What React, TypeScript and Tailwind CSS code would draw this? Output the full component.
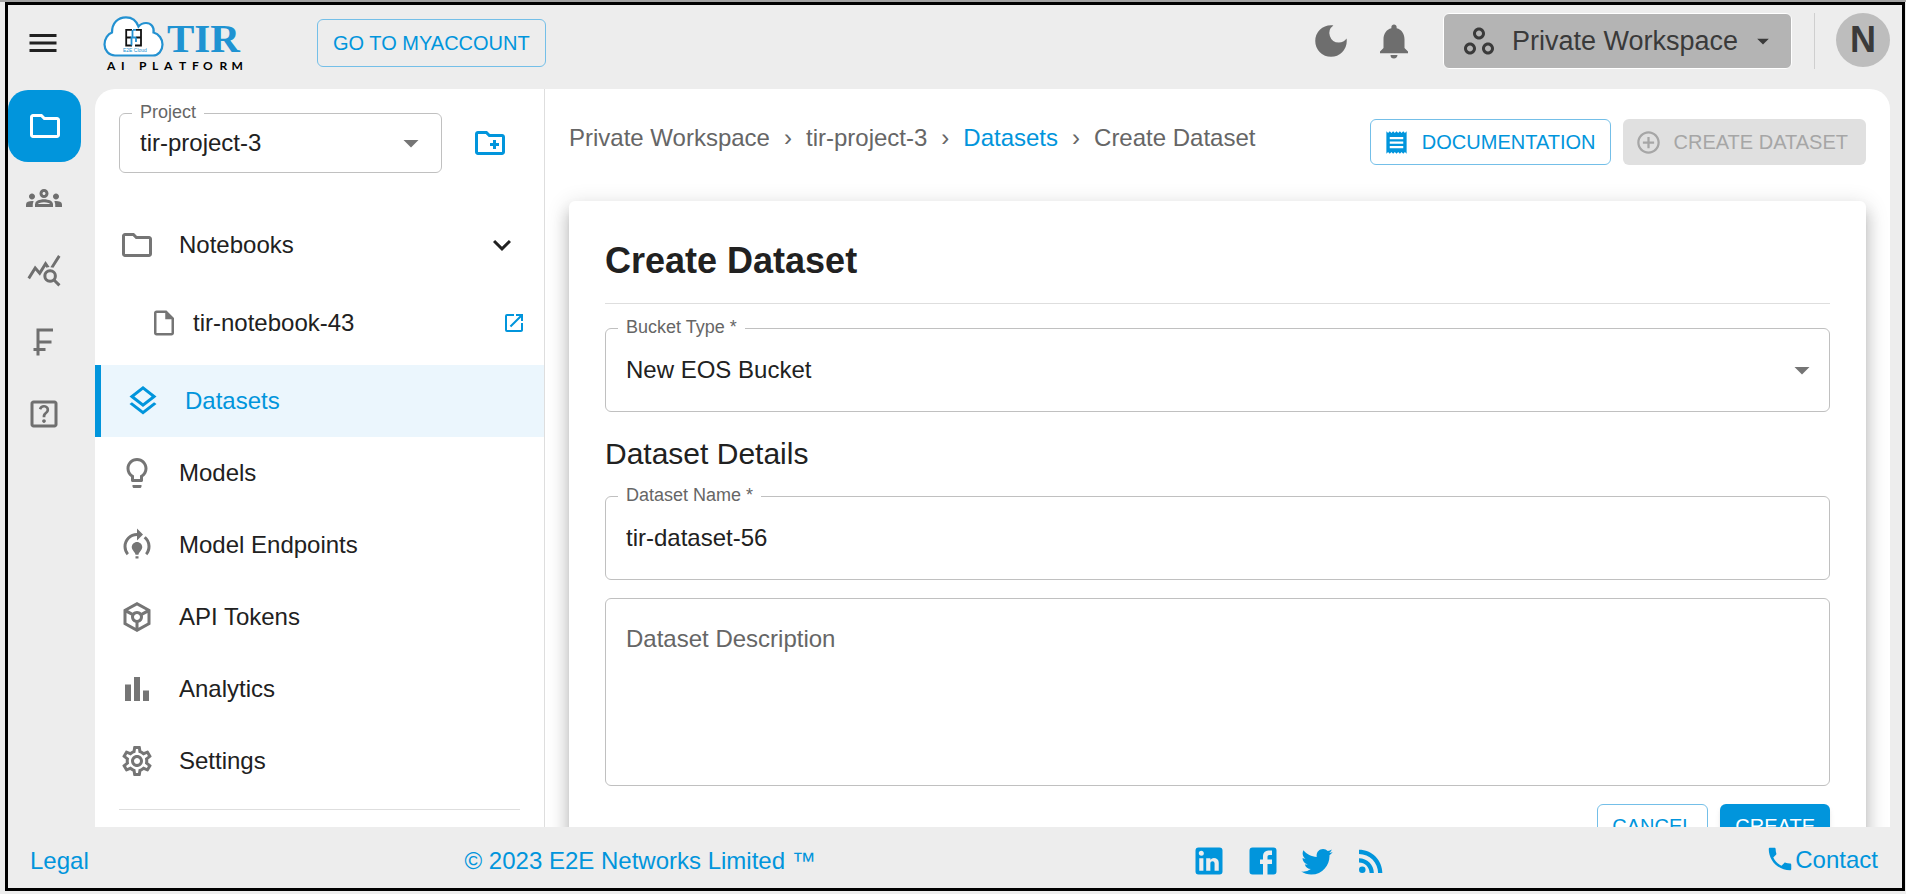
import type { ReactNode } from "react";
import {
  MdAddCircleOutline,
  MdArrowDropDown,
  MdCurrencyFranc,
  MdDarkMode,
  MdExpandMore,
  MdMenu,
  MdModelTraining,
  MdNotifications,
  MdOpenInNew,
  MdOutlineCreateNewFolder,
  MdOutlineFolder,
  MdOutlineGroups,
  MdOutlineHelpCenter,
  MdOutlineInsertDriveFile,
  MdOutlineLayers,
  MdOutlineLightbulb,
  MdOutlineSettings,
  MdOutlineToken,
  MdOutlineWorkspaces,
  MdPhone,
  MdQueryStats,
  MdReceipt,
  MdRssFeed,
} from "react-icons/md";

function PathIcon({ d }: { d: string }) {
  return (
    <svg viewBox="0 0 24 24" fill="currentColor" className="size-9" aria-hidden="true">
      <path d={d} />
    </svg>
  );
}

const LINKEDIN =
  "M19 3a2 2 0 0 1 2 2v14a2 2 0 0 1-2 2H5a2 2 0 0 1-2-2V5a2 2 0 0 1 2-2h14m-.5 15.5v-5.3a3.26 3.26 0 0 0-3.26-3.26c-.85 0-1.84.52-2.32 1.3v-1.11h-2.79v8.37h2.79v-4.93c0-.77.62-1.4 1.39-1.4a1.4 1.4 0 0 1 1.4 1.4v4.93h2.79M6.88 8.56a1.68 1.68 0 0 0 1.68-1.68c0-.93-.75-1.69-1.68-1.69a1.69 1.69 0 0 0-1.69 1.69c0 .93.76 1.68 1.69 1.68m1.39 9.94v-8.37H5.5v8.37h2.77z";
const FACEBOOK =
  "M5 3h14a2 2 0 0 1 2 2v14a2 2 0 0 1-2 2h-4v-7h3v-3h-3V9a1 1 0 0 1 1-1h2V5h-2.5A3.5 3.5 0 0 0 12 8.5V11h-2v3h2v7H5a2 2 0 0 1-2-2V5a2 2 0 0 1 2-2z";
const TWITTER =
  "M22.46 6c-.77.35-1.6.58-2.46.69.88-.53 1.56-1.37 1.88-2.38-.83.5-1.75.85-2.72 1.05C18.37 4.5 17.26 4 16 4c-2.35 0-4.27 1.92-4.27 4.29 0 .34.04.67.11.98C8.28 9.09 5.11 7.38 3 4.79c-.37.63-.58 1.37-.58 2.15 0 1.49.75 2.81 1.91 3.56-.71 0-1.37-.2-1.95-.5v.03c0 2.08 1.48 3.82 3.44 4.21a4.22 4.22 0 0 1-1.93.07 4.28 4.28 0 0 0 4 2.98 8.521 8.521 0 0 1-5.33 1.84c-.34 0-.68-.02-1.02-.06C3.44 20.29 5.7 21 8.12 21 16 21 20.33 14.46 20.33 8.79c0-.19 0-.37-.01-.56.84-.6 1.56-1.36 2.14-2.23z";
const BARS = "M4 9h4v11H4zM16 13h4v7h-4zM10 4h4v16h-4z";

function Logo() {
  return (
    <svg viewBox="0 0 142 56" className="h-14 w-[142px]" role="img" aria-label="TIR AI Platform">
      <path
        d="M12 40.500C5.500 40.500 1.500 35 1.500 29.500C1.500 23.500 5 19 9 17.500C9 8 15 2.300 23 2.300C29 2.300 33.500 6 35.500 11.500C38 8.500 40.500 8 43 8C48 8 51.500 12 50.500 17.500C56 19 59.500 24 59.500 29.500C59.500 35.500 55.500 40.500 50 40.500Z"
        fill="#fff"
        stroke="#2391d1"
        strokeWidth="2.2"
      />
      <g fill="none" strokeWidth="1.8">
        <path d="M29 14.900H23.200V30.500H29M23.200 22.500H28" stroke="#111" />
        <path d="M33 14.900H38V30.500H32M38 22.500H33" stroke="#111" />
        <path d="M29.500 14.900V22.500M33 14.900H30M33 22.500H28.500V30.500M33 22.500V27" stroke="#2391d1" />
      </g>
      <text x="20" y="37" fontSize="5" fill="#2391d1" fontFamily="Liberation Sans, sans-serif">
        E2E Cloud
      </text>
      <text x="64" y="37" fontSize="41" fill="#1f93d2" fontFamily="Liberation Serif, serif" fontWeight="700">
        TIR
      </text>
      <text
        x="4 18 28 36 49 61 76 89 100 116.500 128.500"
        y="55"
        fontSize="12"
        fill="#000"
        fontFamily="Lato, sans-serif"
        fontWeight="700"
      >
        AI PLATFORM
      </text>
    </svg>
  );
}

const rail: { label: string; icon: ReactNode }[] = [
  { label: "Projects", icon: <MdOutlineFolder /> },
  { label: "Team", icon: <MdOutlineGroups /> },
  { label: "Usage", icon: <MdQueryStats /> },
  { label: "Billing", icon: <MdCurrencyFranc /> },
  { label: "Help", icon: <MdOutlineHelpCenter /> },
];

function Rail() {
  return (
    <nav aria-label="Primary" className="w-[87px] shrink-0 pt-px">
      {rail.map(({ label, icon }, i) => (
        <a
          key={label}
          href="#"
          aria-label={label}
          className={
            i === 0
              ? "flex h-[72px] w-[73px] items-center justify-center rounded-[20px] bg-[#0195dc] text-4xl text-white"
              : "flex h-[72px] w-[72px] items-center justify-center text-4xl text-[#6f6f6f]"
          }
        >
          {icon}
        </a>
      ))}
    </nav>
  );
}

const menu: { label: string; icon: ReactNode }[] = [
  { label: "Models", icon: <MdOutlineLightbulb /> },
  { label: "Model Endpoints", icon: <MdModelTraining /> },
  { label: "API Tokens", icon: <MdOutlineToken /> },
  { label: "Analytics", icon: <PathIcon d={BARS} /> },
  { label: "Settings", icon: <MdOutlineSettings /> },
];

function Sidebar() {
  return (
    <aside className="w-[450px] shrink-0 overflow-hidden border-r border-[#dedede] pt-6">
      <div className="flex items-center gap-[30px] px-6">
        <div className="relative flex-1 rounded-md border border-[#c0c0c0]">
          <label htmlFor="project" className="absolute -top-3.5 left-3 bg-white px-2 text-lg leading-6 text-[#666]">
            Project
          </label>
          <select id="project" className="h-[58px] w-full appearance-none bg-transparent px-5">
            <option>tir-project-3</option>
          </select>
          <MdArrowDropDown className="pointer-events-none absolute top-[11px] right-3 text-4xl text-[#757575]" />
        </div>
        <button type="button" aria-label="Create project" className="mr-3 text-4xl text-[#0195dc]">
          <MdOutlineCreateNewFolder />
        </button>
      </div>

      <nav aria-label="Project" className="mt-9">
        <button type="button" className="flex h-[72px] w-full items-center gap-6 px-6 text-left">
          <MdOutlineFolder className="text-4xl text-[#757575]" />
          <span className="flex-1">Notebooks</span>
          <MdExpandMore className="text-4xl" />
        </button>
        <a href="#" className="flex h-[84px] items-center gap-3.5 pr-[18px] pl-[54px]">
          <MdOutlineInsertDriveFile className="text-3xl text-[#757575]" />
          <span className="flex-1">tir-notebook-43</span>
          <MdOpenInNew className="text-2xl text-[#0195dc]" />
        </a>
        <a
          href="#"
          aria-current="page"
          className="flex h-[72px] items-center gap-6 border-l-6 border-[#0195dc] bg-[#ebf6fd] px-6 text-[#0195dc]"
        >
          <MdOutlineLayers className="text-4xl" />
          <span>Datasets</span>
        </a>
        {menu.map(({ label, icon }) => (
          <a key={label} href="#" className="flex h-[72px] items-center gap-6 px-6">
            <span className="text-4xl text-[#757575]">{icon}</span>
            <span>{label}</span>
          </a>
        ))}
      </nav>
      <hr className="mx-6 mt-3 border-[#dedede]" />
    </aside>
  );
}

function Header() {
  return (
    <header className="mb-2 flex h-[76px] items-center pr-3 pl-[17px]">
      <button type="button" aria-label="Menu" className="text-4xl">
        <MdMenu />
      </button>
      <a href="#" className="ml-[42px]">
        <Logo />
      </a>
      <a
        href="#"
        className="ml-[72px] flex h-12 items-center rounded-md border border-[#74bfe8] px-[15px] text-xl text-[#0195dc]"
      >
        GO TO MYACCOUNT
      </a>
      <div className="mt-2 ml-auto flex h-14 self-start">
        <button type="button" aria-label="Dark mode" className="text-[42px] text-[#6e6e6e]">
          <MdDarkMode />
        </button>
        <button type="button" aria-label="Notifications" className="ml-[21px] text-[42px] text-[#6e6e6e]">
          <MdNotifications />
        </button>
        <button
          type="button"
          className="ml-7 flex items-center rounded-md border border-white bg-[#b4b4b4] pr-3.5 pl-[17px] text-[27px] text-[#3a3a3a]"
        >
          <MdOutlineWorkspaces className="text-4xl" />
          <span className="mr-[11px] ml-[15px] leading-9">Private Workspace</span>
          <MdArrowDropDown className="text-[28px]" />
        </button>
        <div className="ml-[22px] w-px bg-[#cfcfcf]" />
        <button
          type="button"
          aria-label="Account"
          className="ml-[21px] size-[54px] rounded-full bg-[#bdbdbd] text-4xl font-bold text-[#3a3a3a]"
        >
          N
        </button>
      </div>
    </header>
  );
}

function Main() {
  return (
    <main className="min-w-0 flex-1 overflow-hidden px-6 pt-[30px]">
      <div className="flex items-start justify-between">
        <nav aria-label="Breadcrumb" className="flex gap-3.5 leading-[38px] text-[#666]">
          <a href="#">Private Workspace</a>
          <span>›</span>
          <a href="#">tir-project-3</a>
          <span>›</span>
          <a href="#" className="text-[#0195dc]">
            Datasets
          </a>
          <span>›</span>
          <span>Create Dataset</span>
        </nav>
        <div className="flex gap-3 text-xl">
          <a
            href="#"
            className="flex h-[46px] items-center gap-3 rounded-md border border-[#74bfe8] pr-3.5 pl-3 text-[#0195dc]"
          >
            <MdReceipt className="text-[27px]" />
            DOCUMENTATION
          </a>
          <button
            type="button"
            disabled
            className="flex h-[46px] items-center gap-3 rounded-md bg-[#e0e0e0] pr-[18px] pl-3 text-[#a6a6a6]"
          >
            <MdAddCircleOutline className="text-[27px]" />
            CREATE DATASET
          </button>
        </div>
      </div>

      <form className="mt-9 rounded-md bg-white p-9 shadow-[0_8px_8px_-5px_rgba(0,0,0,0.2),0_12px_15px_2px_rgba(0,0,0,0.14),0_5px_21px_3px_rgba(0,0,0,0.12)]">
        <h1 className="text-4xl leading-[48px] font-bold">Create Dataset</h1>
        <hr className="mt-[18px] border-[#dedede]" />
        <div className="relative mt-6 rounded-md border border-[#c0c0c0]">
          <label htmlFor="bucket" className="absolute -top-3.5 left-3 bg-white px-2 text-lg leading-6 text-[#666]">
            Bucket Type *
          </label>
          <select id="bucket" className="h-[82px] w-full appearance-none bg-transparent px-5">
            <option>New EOS Bucket</option>
          </select>
          <MdArrowDropDown className="pointer-events-none absolute top-[23px] right-[9px] text-4xl text-[#757575]" />
        </div>
        <h2 className="mt-[21px] text-3xl leading-[42px]">Dataset Details</h2>
        <div className="relative mt-[21px] rounded-md border border-[#c0c0c0]">
          <label htmlFor="name" className="absolute -top-3.5 left-3 bg-white px-2 text-lg leading-6 text-[#666]">
            Dataset Name *
          </label>
          <input id="name" defaultValue="tir-dataset-56" className="block h-[82px] w-full bg-transparent px-5" />
        </div>
        <textarea
          aria-label="Dataset Description"
          placeholder="Dataset Description"
          className="mt-[18px] block h-[188px] w-full resize-none rounded-md border border-[#c0c0c0] px-5 py-[22px] leading-9 placeholder:text-[#666]"
        />
        <div className="mt-[18px] flex justify-end gap-3 text-xl">
          <button type="button" className="h-12 rounded-md border border-[#74bfe8] px-3.5 pb-1 text-[#0195dc]">
            CANCEL
          </button>
          <button type="submit" className="h-12 rounded-md bg-[#0195dc] px-[15px] pb-1 text-white shadow-md">
            CREATE
          </button>
        </div>
      </form>
    </main>
  );
}

function Footer() {
  return (
    <footer className="flex h-[61px] items-center justify-between pt-[7px] pr-6 pl-[22px] text-[#0195dc]">
      <a href="#">Legal</a>
      <span>© 2023 E2E Networks Limited ™</span>
      <div className="flex gap-[18px] text-4xl">
        <a href="#" aria-label="LinkedIn">
          <PathIcon d={LINKEDIN} />
        </a>
        <a href="#" aria-label="Facebook">
          <PathIcon d={FACEBOOK} />
        </a>
        <a href="#" aria-label="Twitter">
          <PathIcon d={TWITTER} />
        </a>
        <a href="#" aria-label="RSS">
          <MdRssFeed />
        </a>
      </div>
      <a href="#" className="flex">
        <MdPhone className="mb-1 text-3xl" />
        Contact
      </a>
    </footer>
  );
}

export default function App() {
  return (
    <div className="h-screen border-t-2 border-[#a3a3a3] bg-[#ededed] pr-px pb-[3px] pl-[5px] font-['Liberation_Sans',Arial,sans-serif] text-2xl text-[#212121]">
      <div className="flex h-full flex-col border-3 border-black">
        <Header />
        <div className="flex min-h-0 flex-1 pr-3">
          <Rail />
          <div className="flex min-w-0 flex-1 overflow-hidden rounded-t-[20px] bg-white">
            <Sidebar />
            <Main />
          </div>
        </div>
        <Footer />
      </div>
    </div>
  );
}
